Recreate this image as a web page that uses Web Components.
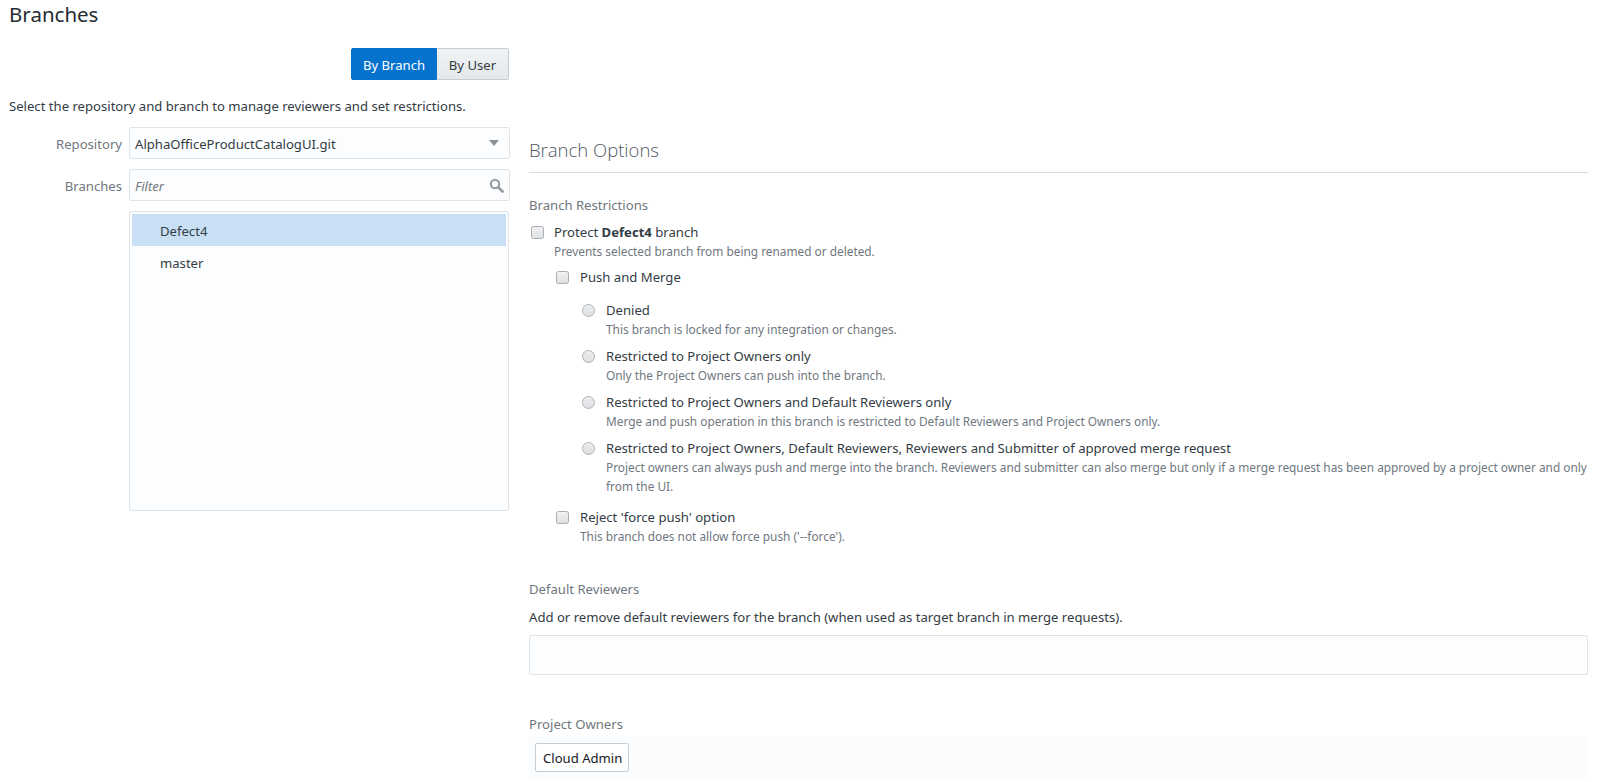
<!DOCTYPE html>
<html><head><meta charset="utf-8"><title>Branches</title>
<style>
html,body{margin:0;padding:0;background:#fff;height:782px;overflow:hidden}
body{font:13.12px/17px "Noto Sans","Open Sans",sans-serif;color:#333c44}
</style></head><body>
<branches-page></branches-page>
<script>
function def(name, html){
  customElements.define(name, class extends HTMLElement{
    constructor(){super();const r=this.attachShadow({mode:'open'});r.innerHTML=html;}
  });
}
const CB=`<svg width="13" height="13" viewBox="0 0 13 13" style="display:block"><defs><linearGradient id="g" x1="0" y1="0" x2="0" y2="1"><stop offset="0" stop-color="#f1f2f3"/><stop offset="1" stop-color="#dfe1e3"/></linearGradient></defs><rect x=".5" y=".5" width="12" height="12" rx="2" fill="url(#g)" stroke="#a9adb1"/></svg>`;
const RB=`<svg width="13" height="13" viewBox="0 0 13 13" style="display:block"><defs><linearGradient id="h" x1="0" y1="0" x2="0" y2="1"><stop offset="0" stop-color="#eceef0"/><stop offset="1" stop-color="#dcdee0"/></linearGradient></defs><circle cx="6.5" cy="6.5" r="6" fill="url(#h)" stroke="#b0b3b7"/></svg>`;
def('x-option',`<style>
:host{display:grid;grid-template-columns:13px 1fr;column-gap:var(--gap,11px)}
.i{padding-top:3px} ::slotted([slot=label]){display:block;color:#333c44;line-height:19px}
.d{font-size:11.85px;line-height:19px;color:#6f7780;white-space:var(--ws,nowrap)}
</style><div class="i"></div><div><slot name="label"></slot><div class="d"><slot></slot></div></div>`);
customElements.define('x-check',class extends customElements.get('x-option'){connectedCallback(){this.shadowRoot.querySelector('.i').innerHTML=CB}});
customElements.define('x-radio',class extends customElements.get('x-option'){connectedCallback(){this.shadowRoot.querySelector('.i').innerHTML=RB}});
def('x-toggle',`<style>
:host{display:flex;justify-content:flex-end;height:32px;width:500px}
div{box-sizing:border-box;height:32px;line-height:32px;text-align:center;border:1px solid #c4ced7}
.a{width:86px;background:#0572ce;border-color:#0572ce;color:#fff;border-radius:2px 0 0 2px}
.b{width:72px;background:linear-gradient(#f1f3f4,#e4e8ea);border-left:0;color:#333c44;border-radius:0 2px 2px 0}
</style><div class="a">By Branch</div><div class="b">By User</div>`);
def('x-field',`<style>
:host{display:grid;grid-template-columns:113px 1fr;column-gap:7px;align-items:center}
label{text-align:right;color:#6f7780;padding-top:2px}
.f{box-sizing:border-box;height:32px;border:1px solid #dfe4e8;border-radius:2px;background:#fcfdfe;display:flex;align-items:center;justify-content:space-between;padding:0 5px}
</style><label><slot name="label"></slot></label><div class="f"><slot></slot><slot name="icon"></slot></div>`);
def('x-list',`<style>
:host{display:block;box-sizing:border-box;margin-left:120px;width:380px;height:300px;border:1px solid #dfe4e8;border-radius:2px;background:#fcfdfe;padding:2px}
div{height:32px;line-height:34px;padding-left:28px}
.s{background:#c9e0f4}
</style><div class="s">Defect4</div><div>master</div>`);
def('x-heading',`<style>:host{display:block;color:#6f7780;line-height:20px}</style><slot></slot>`);
def('x-tray',`<style>
:host{display:block;background:#fbfcfe;padding:6px;height:41px;box-sizing:border-box;margin-top:3px}
span{display:block;width:94px;box-sizing:border-box;height:29px;line-height:28px;border:1px solid #c4ced7;border-radius:2px;background:#fff;padding-left:7px;color:#16191d;white-space:nowrap}
</style><span><slot></slot></span>`);
def('branches-page',`<style>
:host{display:block;width:1598px;height:782px;overflow:hidden}
.grid{display:grid;grid-template-columns:501px 1059px;column-gap:19px;padding:0 0 0 9px}
h1{font-size:20.5px;font-weight:400;line-height:28px;margin:0;color:#252c33}
.left x-toggle{margin-top:20px}
.intro{margin-top:18px;line-height:17px;color:#333c44}
.form{display:flex;flex-direction:column;gap:10px;margin-top:12px}
h2{font-size:18.5px;font-weight:300;font-family:"Open Sans","Noto Sans",sans-serif;line-height:26px;margin:0;padding:0 0 9px;color:#4f5861;border-bottom:1px solid #d6dfe6}
.right{padding-top:137px}
.ph{font-style:italic;color:#6f7780;font-size:13px;padding-top:2px}
.sel{color:#333c44;padding-top:2px}
.tree{margin-left:27px;margin-top:7px}
.radios{margin-left:26px;margin-top:14px;display:flex;flex-direction:column;gap:8px}
.desc{margin-top:8px;line-height:20px}
.box{height:40px;box-sizing:border-box;border:1px solid #dfe4e8;border-radius:2px;background:#fcfdfe;margin-top:8px}
</style>
<div class="grid">
<div class="left">
<h1>Branches</h1>
<x-toggle></x-toggle>
<div class="intro">Select the repository and branch to manage reviewers and set restrictions.</div>
<div class="form">
<x-field><span slot="label">Repository</span><span class="sel">AlphaOfficeProductCatalogUI.git</span><svg slot="icon" width="12" height="8" viewBox="0 0 12 8" style="margin-right:4px"><path d="M1 1h10L6 7z" fill="#8a9096"/></svg></x-field>
<x-field><span slot="label">Branches</span><span class="ph">Filter</span><svg slot="icon" width="15" height="15" viewBox="0 0 15 15"><circle cx="6" cy="6" r="4.2" fill="none" stroke="#9a9fa4" stroke-width="2.2"/><path d="M9.3 9.3l4.2 4.2" stroke="#9a9fa4" stroke-width="2.8" stroke-linecap="round"/></svg></x-field>
<x-list></x-list>
</div>
</div>
<div class="right">
<h2>Branch Options</h2>
<x-heading style="margin-top:22px">Branch Restrictions</x-heading>
<x-check style="margin-top:8px;margin-left:2px;--gap:10px"><span slot="label">Protect <b>Defect4</b> branch</span>Prevents selected branch from being renamed or deleted.</x-check>
<div class="tree">
<x-check><span slot="label">Push and Merge</span></x-check>
<div class="radios">
<x-radio><span slot="label">Denied</span>This branch is locked for any integration or changes.</x-radio>
<x-radio><span slot="label">Restricted to Project Owners only</span>Only the Project Owners can push into the branch.</x-radio>
<x-radio><span slot="label">Restricted to Project Owners and Default Reviewers only</span>Merge and push operation in this branch is restricted to Default Reviewers and Project Owners only.</x-radio>
<x-radio style="--ws:normal"><span slot="label">Restricted to Project Owners, Default Reviewers, Reviewers and Submitter of approved merge request</span>Project owners can always push and merge into the branch. Reviewers and submitter can also merge but only if a merge request has been approved by a project owner and only from the UI.</x-radio>
</div>
<x-check style="margin-top:12px"><span slot="label">Reject 'force push' option</span>This branch does not allow force push ('--force').</x-check>
</div>
<x-heading style="margin-top:33px">Default Reviewers</x-heading>
<div class="desc">Add or remove default reviewers for the branch (when used as target branch in merge requests).</div>
<div class="box"></div>
<x-heading style="margin-top:39px">Project Owners</x-heading>
<x-tray>Cloud Admin</x-tray>
</div>
</div>`);
</script>
</body></html>
